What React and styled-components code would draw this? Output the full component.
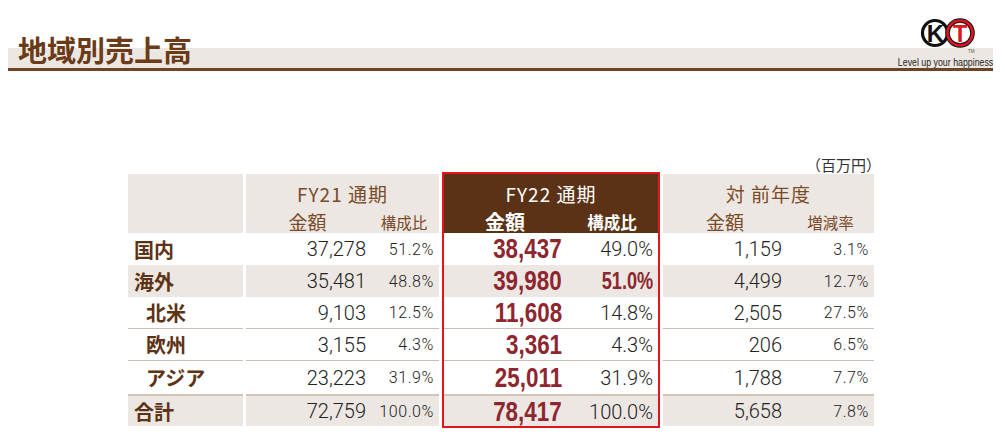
import React from 'react';
import styled, { createGlobalStyle } from 'styled-components';

const GlobalStyle = createGlobalStyle`
  html, body {
    margin: 0;
    padding: 0;
    background: #fff;
  }
  body {
    font-family: "Noto Sans CJK JP", "Noto Sans", sans-serif;
  }
`;

const Page = styled.div`
  width: 1005px;
  height: 446px;
  overflow: hidden;
`;

const TitleBar = styled.header`
  margin: 48px 12px 0 8px;
  height: 20px;
  background: #ece7e2;
  border-bottom: 3px solid #6e4421;
  display: flex;
  align-items: flex-end;
  justify-content: space-between;
`;

const Title = styled.h1`
  margin: 0 0 4px 10px;
  font-size: 29px;
  line-height: 29px;
  font-weight: 700;
  color: #6b3a17;
`;

const Brand = styled.div`
  display: flex;
  flex-direction: column;
  align-items: flex-end;
`;

const LogoMark = styled.svg`
  display: block;
  margin-right: 17px;
`;

const Tagline = styled.div`
  font-family: "Liberation Sans", sans-serif;
  font-size: 11px;
  line-height: 12px;
  color: #222;
  white-space: nowrap;
  transform: scaleX(0.8);
  transform-origin: right center;
`;

const TableWrap = styled.section`
  margin-left: 128px;
  width: 747px;
`;

const Unit = styled.div`
  margin: 86px -6px 0 0;
  text-align: right;
  font-size: 15px;
  line-height: 16px;
  color: #333;
`;

const Table = styled.div`
  display: flex;
  gap: 3px;
  align-items: flex-start;
`;

const Group = styled.div`
  width: ${p => p.$width}px;
  margin-top: ${p => (p.$focus ? -1 : 1)}px;
  border: ${p => (p.$focus ? '2px solid #e3141b' : 'none')};
`;

const Head = styled.div`
  box-sizing: border-box;
  height: 59px;
  padding-top: 8px;
  display: grid;
  grid-template-columns: ${p => p.$cols};
  align-content: start;
  row-gap: 6px;
  background: ${p => (p.$focus ? '#5b3215' : '#ece7e2')};
  color: ${p => (p.$focus ? '#fff' : '#7b4a28')};
`;

const HeadTitle = styled.div`
  grid-column: 1 / -1;
  text-align: center;
  font-size: 19px;
  line-height: 24px;
  letter-spacing: 1px;
`;

const HeadSub = styled.div`
  text-align: center;
  font-size: ${p => p.$size}px;
  line-height: 20px;
  font-weight: ${p => (p.$focus ? 700 : 400)};
`;

const Row = styled.div`
  box-sizing: border-box;
  height: ${p => p.$height}px;
  display: grid;
  grid-template-columns: ${p => p.$cols};
  background: ${p => (p.$shaded ? '#ece7e2' : '#fff')};
  border-bottom: ${p => (p.$line ? '1px solid #cdbdb2' : 'none')};
  border-top: ${p => (p.$top ? '2px solid #d3c4b9' : 'none')};
`;

const Label = styled.div`
  display: flex;
  align-items: center;
  padding-left: ${p => (p.$indent ? 18 : 6)}px;
  font-size: 20px;
  font-weight: 700;
  color: #5e3214;
`;

const Cell = styled.div`
  display: flex;
  align-items: center;
  justify-content: flex-end;
  padding-right: ${p => p.$pad}px;
  white-space: nowrap;
`;

const Amount = styled.span`
  font-family: Roboto, "Liberation Sans", sans-serif;
  font-weight: 300;
  font-size: 20px;
  color: #222;
`;

/* no narrow face installed, so the bold red figures are squeezed */
const BigAmount = styled.span`
  display: inline-block;
  font-family: "Liberation Sans", sans-serif;
  font-weight: 700;
  font-size: 28px;
  color: #8e2630;
  transform: scaleX(0.8);
  transform-origin: right center;
`;

const Share = styled.span`
  font-family: Roboto, "Liberation Sans", sans-serif;
  font-weight: 300;
  font-size: ${p => p.$size}px;
  letter-spacing: ${p => (p.$size < 18 ? 0.6 : 0)}px;
  color: #222;
`;

const StrongShare = styled.span`
  display: inline-block;
  font-family: "Liberation Sans", sans-serif;
  font-weight: 700;
  font-size: 23px;
  color: #8e2630;
  transform: scaleX(0.79);
  transform-origin: right center;
`;

const rows = [
  { label: '国内', h: 32, fy21: ['37,278', '51.2%'], fy22: ['38,437', '49.0%'], yoy: ['1,159', '3.1%'] },
  { label: '海外', h: 32, shaded: true, strong: true, fy21: ['35,481', '48.8%'], fy22: ['39,980', '51.0%'], yoy: ['4,499', '12.7%'] },
  { label: '北米', h: 32, indent: true, line: true, fy21: ['9,103', '12.5%'], fy22: ['11,608', '14.8%'], yoy: ['2,505', '27.5%'] },
  { label: '欧州', h: 32, indent: true, line: true, fy21: ['3,155', '4.3%'], fy22: ['3,361', '4.3%'], yoy: ['206', '6.5%'] },
  { label: 'アジア', h: 33, indent: true, fy21: ['23,223', '31.9%'], fy22: ['25,011', '31.9%'], yoy: ['1,788', '7.7%'] },
  { label: '合計', h: 32, shaded: true, top: true, fy21: ['72,759', '100.0%'], fy22: ['78,417', '100.0%'], yoy: ['5,658', '7.8%'] },
];

const groups = [
  { key: 'fy21', width: 193, cols: '123px 70px', title: 'FY21 通期', subs: ['金額', '構成比'], pads: [3, 5] },
  { key: 'fy22', width: 214, cols: '122px 92px', title: 'FY22 通期', subs: ['金額', '構成比'], pads: [4, 5], focus: true },
  { key: 'yoy', width: 211, cols: '124px 87px', title: '対 前年度', subs: ['金額', '増減率'], pads: [5, 5] },
];

const KTLogo = () => (
  <LogoMark width="60" height="46" viewBox="0 0 60 46">
    <circle cx="19" cy="23" r="12.5" fill="#fff" stroke="#111" strokeWidth="3.2" />
    <circle cx="44" cy="23" r="12.5" fill="#fff" stroke="#111" strokeWidth="4.6" />
    <circle cx="44" cy="23" r="12.5" fill="none" stroke="#e0161e" strokeWidth="2.6" />
    <text x="19.5" y="31.5" textAnchor="middle" fontFamily="Liberation Sans, sans-serif" fontWeight="700" fontSize="24" fill="#111">K</text>
    <text x="44" y="31.5" textAnchor="middle" fontFamily="Liberation Sans, sans-serif" fontWeight="700" fontSize="24" fill="#e0161e">T</text>
    <text x="52" y="42.5" fontFamily="Liberation Sans, sans-serif" fontSize="4.5" fill="#555">TM</text>
  </LogoMark>
);

const App = () => {
  return (
    <>
      <GlobalStyle />
      <Page>
        <TitleBar>
          <Title>地域別売上高</Title>
          <Brand>
            <KTLogo />
            <Tagline>Level up your happiness</Tagline>
          </Brand>
        </TitleBar>

        <TableWrap>
          <Unit>（百万円）</Unit>
          <Table>
            <Group $width={115}>
              <Head $cols="1fr" />
              {rows.map(r => (
                <Row key={r.label} $cols="1fr" $height={r.h} $shaded={r.shaded} $line={r.line} $top={r.top}>
                  <Label $indent={r.indent}>{r.label}</Label>
                </Row>
              ))}
            </Group>

            {groups.map(g => (
              <Group key={g.key} $width={g.width} $focus={g.focus}>
                <Head $cols={g.cols} $focus={g.focus}>
                  <HeadTitle>{g.title}</HeadTitle>
                  <HeadSub $size={g.focus ? 20 : 19} $focus={g.focus}>{g.subs[0]}</HeadSub>
                  <HeadSub $size={g.focus ? 16.5 : 15.5} $focus={g.focus}>{g.subs[1]}</HeadSub>
                </Head>
                {rows.map(r => {
                  const [amount, share] = r[g.key];
                  return (
                    <Row key={r.label} $cols={g.cols} $height={r.h} $shaded={r.shaded} $line={r.line} $top={r.top}>
                      <Cell $pad={g.pads[0]}>
                        {g.focus ? <BigAmount>{amount}</BigAmount> : <Amount>{amount}</Amount>}
                      </Cell>
                      <Cell $pad={g.pads[1]}>
                        {g.focus && r.strong ? (
                          <StrongShare>{share}</StrongShare>
                        ) : (
                          <Share $size={g.focus ? 20 : 16}>{share}</Share>
                        )}
                      </Cell>
                    </Row>
                  );
                })}
              </Group>
            ))}
          </Table>
        </TableWrap>
      </Page>
    </>
  );
};

export default App;
